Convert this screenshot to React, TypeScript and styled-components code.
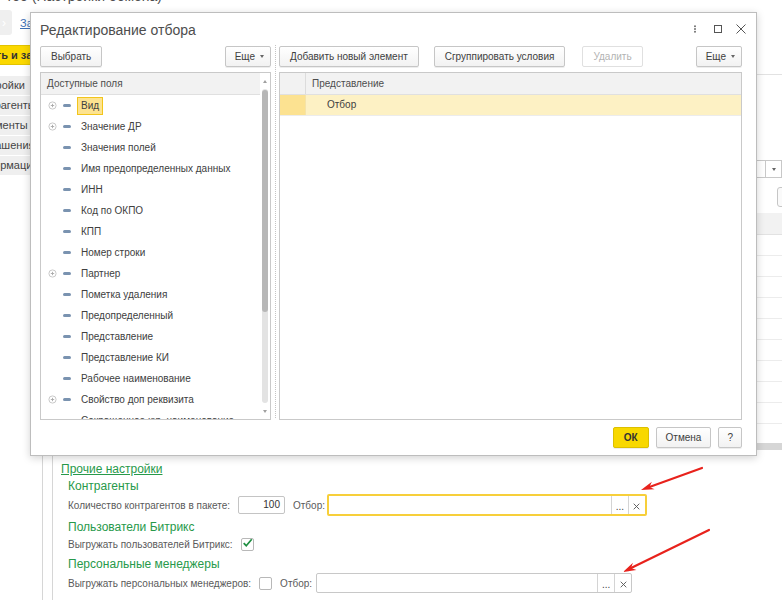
import React from "react";
import styled, { createGlobalStyle, css } from "styled-components";

const FONT = `"Liberation Sans", Arial, "DejaVu Sans", sans-serif`;

const GlobalStyle = createGlobalStyle`
  html, body { margin: 0; padding: 0; background: #ffffff; }
  * { box-sizing: border-box; }
`;

const Page = styled.div`
  position: relative;
  width: 782px;
  height: 607px;
  overflow: hidden;
  background: #fff;
  font-family: ${FONT};
  font-size: 10px;
  color: #404040;
`;

/* ---------- background form ---------- */
const FormTitle = styled.div`
  margin-top: -13px;
  height: 18px;
  padding-left: 6px;
  font-size: 14px;
  line-height: 18px;
  color: #4d4d4d;
  white-space: nowrap;
`;

const CommandRow = styled.div`
  display: flex;
  align-items: center;
  gap: 8px;
  height: 25px;
  margin-top: 5px;
  margin-left: -12px;
`;

const NavButton = styled.div`
  width: 24px;
  height: 25px;
  border-radius: 3px;
  background: #efefef;
  color: #fff;
  font-size: 12px;
  display: flex;
  align-items: center;
  justify-content: flex-end;
  padding-right: 6px;
`;

const FormLink = styled.span`
  font-size: 11px;
  color: #3d6fb6;
  text-decoration: underline;
  white-space: nowrap;
`;

const SaveRow = styled.div`
  display: flex;
  height: 20px;
  margin-top: 10px;
  margin-left: -54px;
`;

const SaveButton = styled.div`
  height: 20px;
  padding: 0 10px;
  background: #fbd800;
  border: 1px solid #e2c300;
  border-radius: 2px;
  font-weight: bold;
  font-size: 11px;
  line-height: 18px;
  color: #333;
  white-space: nowrap;
`;

const Workspace = styled.div`
  display: flex;
  align-items: stretch;
  margin-top: 9px;
  height: 526px;
`;

const TabList = styled.div`
  flex: none;
  width: 73px;
  margin-left: -35px;
  margin-top: 2px;
  align-self: flex-start;
  display: flex;
  flex-direction: column;
`;

const Tab = styled.div`
  height: 20px;
  padding-left: 6px;
  background: #efefef;
  border-bottom: 1px solid #ffffff;
  font-size: 11px;
  line-height: 19px;
  color: #444;
  white-space: nowrap;
  overflow: hidden;
`;

const Content = styled.div`
  flex: 1;
  min-width: 0;
  margin-left: 4px;
  border-left: 1px solid #d6d6d6;
  display: flex;
  flex-direction: column;
`;

const TopLine = styled.div`
  height: 1px;
  background: #e2e2e2;
  flex: none;
`;

const Inner = styled.div`
  flex: 1;
  margin-left: 9px;
  border-left: 1px solid #d6d6d6;
  padding-left: 8px;
  display: flex;
  flex-direction: column;
`;

const FilterRow = styled.div`
  display: flex;
  justify-content: flex-end;
  margin-top: 85px;
  height: 18px;
`;

const SelectBox = styled.div`
  width: 190px;
  height: 18px;
  border: 1px solid #c8c8c8;
  display: flex;
  justify-content: flex-end;
`;

const SelectDrop = styled.div`
  width: 16px;
  border-left: 1px solid #c8c8c8;
  display: flex;
  align-items: center;
  justify-content: center;
`;

const Caret = styled.span<{ $up?: boolean; $color?: string }>`
  display: inline-block;
  width: 0;
  height: 0;
  border-left: 2.5px solid transparent;
  border-right: 2.5px solid transparent;
  ${(p) =>
    p.$up
      ? css`border-bottom: 3px solid ${p.$color || "#a0a0a0"};`
      : css`border-top: 3px solid ${p.$color || "#666"};`}
`;

const BgButtonRow = styled.div`
  display: flex;
  justify-content: flex-end;
  margin-top: 9px;
  height: 20px;
`;

const BgButton = styled.div`
  width: 65px;
  height: 20px;
  margin-right: -60px;
  border: 1px solid #c6c6c6;
  border-radius: 3px;
  background: #fafafa;
`;

const BgTable = styled.div`
  margin-top: 6px;
  margin-left: 60px;
  margin-right: -40px;
  border-left: 1px solid #d0d0d0;
`;

const BgTableHead = styled.div`
  height: 22px;
  background: #f2f2f2;
  border-bottom: 1px solid #e2e2e2;
`;

const BgTableRow = styled.div`
  height: 21px;
  border-bottom: 1px solid #ececec;
`;

const BgTableFill = styled.div`
  height: 19px;
`;

const BgHScroll = styled.div`
  height: 7px;
  background: #d6d6d6;
`;

const Group = styled.div`
  margin-top: 12px;
  display: flex;
  flex-direction: column;
`;

const GREEN = "#27994a";

const GroupLink = styled.span`
  align-self: flex-start;
  font-size: 12px;
  line-height: 14px;
  color: ${GREEN};
  text-decoration: underline;
  white-space: nowrap;
`;

const GroupBody = styled.div`
  padding-left: 7px;
  display: flex;
  flex-direction: column;
`;

const SubTitle = styled.div<{ $gap: number }>`
  margin-top: ${(p) => p.$gap}px;
  font-size: 12px;
  line-height: 15px;
  color: ${GREEN};
  white-space: nowrap;
`;

const FieldRow = styled.div<{ $h: number; $gap: number }>`
  display: flex;
  align-items: center;
  height: ${(p) => p.$h}px;
  margin-top: ${(p) => p.$gap}px;
  white-space: nowrap;
`;

const Label = styled.span<{ $after?: number }>`
  color: #5a5a5a;
  margin-right: ${(p) => p.$after ?? 0}px;
  white-space: nowrap;
`;

const NumInput = styled.div`
  width: 47px;
  height: 18px;
  border: 1px solid #c4c4c4;
  border-radius: 2px;
  text-align: right;
  padding-right: 4px;
  line-height: 16px;
  color: #333;
  margin-right: 8px;
`;

const Field = styled.div<{ $focused?: boolean; $w: number }>`
  width: ${(p) => p.$w}px;
  display: flex;
  background: #fff;
  border-radius: 2px;
  ${(p) =>
    p.$focused
      ? css`
          height: 22px;
          border: 2px solid #f7cf3a;
        `
      : css`
          height: 20px;
          border: 1px solid #c8c8c8;
        `}
`;

const FieldText = styled.div`
  flex: 1;
`;

const FieldButton = styled.div`
  width: 17px;
  border-left: 1px solid #d4d4d4;
  display: flex;
  align-items: center;
  justify-content: center;
  color: #444;
  font-size: 10px;
  padding-top: 3px;
`;

const CheckBox = styled.div<{ $after: number }>`
  width: 13px;
  height: 13px;
  border: 1px solid #b8b8b8;
  border-radius: 2px;
  background: #fff;
  margin-right: ${(p) => p.$after}px;
  display: flex;
  align-items: center;
  justify-content: center;
  flex: none;
`;

/* ---------- dialog ---------- */
const Dialog = styled.div`
  position: absolute;
  left: 30px;
  top: 12px;
  width: 727px;
  height: 444px;
  background: #fff;
  border: 1px solid #bdbdbd;
  box-shadow: 0 2px 8px rgba(0, 0, 0, 0.18);
  display: flex;
  flex-direction: column;
  padding: 0 14px 7px 9px;
  z-index: 2;
`;

const TitleBar = styled.div`
  flex: none;
  height: 32px;
  display: flex;
  align-items: center;
`;

const DialogTitle = styled.div`
  flex: 1;
  font-size: 14px;
  color: #4d4d4d;
  padding-top: 1px;
`;

const WindowIcons = styled.div`
  display: flex;
  align-items: center;
  gap: 9px;
  margin-right: -6px;
`;

const IconBox = styled.span`
  width: 14px;
  height: 14px;
  display: flex;
`;

const Body = styled.div`
  flex: 1;
  min-height: 0;
  display: grid;
  grid-template-columns: 231px 8px 1fr;
  grid-template-rows: 22px 1fr;
  row-gap: 5px;
`;

const ToolbarLeft = styled.div`
  grid-column: 1;
  grid-row: 1;
  display: flex;
  align-items: center;
  justify-content: space-between;
`;

const ToolbarRight = styled.div`
  grid-column: 3;
  grid-row: 1;
  display: flex;
  align-items: center;
`;

const Splitter = styled.div`
  grid-column: 2;
  grid-row: 1 / 3;
  margin-left: 4px;
  margin-bottom: 2px;
  border-left: 1px dotted #c4c4c4;
`;

const Btn = styled.div<{ $primary?: boolean; $disabled?: boolean; $gapAfter?: number; $pad?: string }>`
  flex: none;
  height: 21px;
  padding: ${(p) => p.$pad || "0 10px"};
  margin-right: ${(p) => p.$gapAfter ?? 0}px;
  display: inline-flex;
  align-items: center;
  gap: 5px;
  font-size: 10px;
  color: #404040;
  white-space: nowrap;
  background: linear-gradient(#ffffff, #f2f2f2);
  border: 1px solid #c6c6c6;
  border-radius: 2px;
  box-shadow: 0 1px 0 rgba(0, 0, 0, 0.07);
  ${(p) =>
    p.$primary &&
    css`
      background: #f8d800;
      border-color: #dcc000;
      font-weight: bold;
      color: #333;
    `}
  ${(p) =>
    p.$disabled &&
    css`
      background: #ffffff;
      border-color: #e0e0e0;
      color: #b3b3b3;
      box-shadow: none;
    `}
`;

const Spacer = styled.div`
  flex: 1;
`;

const Panel = styled.div<{ $col: number }>`
  grid-column: ${(p) => p.$col};
  grid-row: 2;
  min-height: 0;
  border: 1px solid #c9c9c9;
  background: #fff;
  display: flex;
  overflow: hidden;
`;

const FieldsPane = styled.div`
  flex: 1;
  min-width: 0;
  display: flex;
  flex-direction: column;
`;

const PaneHeader = styled.div`
  flex: none;
  height: 22px;
  background: #f2f2f2;
  border-bottom: 1px solid #e0e0e0;
  padding-left: 6px;
  line-height: 21px;
  color: #4d4d4d;
`;

const TreeList = styled.div`
  flex: 1;
  overflow: hidden;
`;

const TreeRow = styled.div`
  height: 21px;
  display: flex;
  align-items: center;
  padding-left: 6px;
  white-space: nowrap;
`;

const Expander = styled.span`
  width: 10px;
  height: 10px;
  display: flex;
  align-items: center;
  justify-content: center;
  flex: none;
`;

const FieldDash = styled.span`
  width: 8px;
  height: 3px;
  margin-left: 6px;
  border-radius: 1.5px;
  background: #7a93b0;
  flex: none;
`;

const FieldName = styled.span<{ $selected?: boolean }>`
  margin-left: 6px;
  height: 18px;
  padding: 0 3px;
  line-height: 16px;
  border: 1px solid transparent;
  color: #404040;
  ${(p) =>
    p.$selected &&
    css`
      background: #fde390;
      border-color: #f2c51c;
    `}
`;

const ScrollBar = styled.div`
  flex: none;
  width: 10px;
  display: flex;
  flex-direction: column;
  align-items: center;
`;

const ScrollArrow = styled.div`
  flex: none;
  height: 16px;
  display: flex;
  align-items: center;
  justify-content: center;
`;

const ScrollTrack = styled.div`
  flex: 1;
  width: 6px;
  border-radius: 3px;
  background: #e3e3e3;
`;

const ScrollThumb = styled.div`
  margin-top: 1px;
  height: 222px;
  border-radius: 3px;
  background: #b7b7b7;
`;

const GridPane = styled.div`
  flex: 1;
  display: flex;
  flex-direction: column;
`;

const GridHeader = styled.div`
  height: 22px;
  display: flex;
  background: #f2f2f2;
  border-bottom: 1px solid #e0e0e0;
  flex: none;
`;

const GridRow = styled.div<{ $selected?: boolean }>`
  height: 21px;
  display: flex;
  border-bottom: 1px solid #ececec;
  flex: none;
  ${(p) => p.$selected && css`background: #fdf1c4;`}
`;

const MarkCell = styled.div<{ $selected?: boolean }>`
  width: 26px;
  flex: none;
  border-right: 1px solid #dcdcdc;
  ${(p) => p.$selected && css`background: #fce291; border-right-color: #f5e3a8;`}
`;

const GridCell = styled.div<{ $indent: number; $head?: boolean }>`
  flex: 1;
  padding-left: ${(p) => p.$indent}px;
  line-height: ${(p) => (p.$head ? 21 : 20)}px;
  color: ${(p) => (p.$head ? "#4d4d4d" : "#404040")};
`;

const Footer = styled.div`
  flex: none;
  margin-top: 7px;
  height: 21px;
  display: flex;
  justify-content: flex-end;
  gap: 7px;
`;

const Overlay = styled.svg`
  position: absolute;
  left: 0;
  top: 0;
  pointer-events: none;
  z-index: 3;
`;

/* ---------- data ---------- */
const fields: { name: string; expand?: boolean; selected?: boolean }[] = [
  { name: "Вид", expand: true, selected: true },
  { name: "Значение ДР", expand: true },
  { name: "Значения полей" },
  { name: "Имя предопределенных данных" },
  { name: "ИНН" },
  { name: "Код по ОКПО" },
  { name: "КПП" },
  { name: "Номер строки" },
  { name: "Партнер", expand: true },
  { name: "Пометка удаления" },
  { name: "Предопределенный" },
  { name: "Представление" },
  { name: "Представление КИ" },
  { name: "Рабочее наименование" },
  { name: "Свойство доп реквизита", expand: true },
  { name: "Сокращенное юр. наименование" },
];

const tabs = ["Настройки", "Контрагенты", "Документы", "Соглашения", "Информация"];

const PlusCircle = () => (
  <svg width="9" height="9" viewBox="0 0 9 9">
    <circle cx="4.5" cy="4.5" r="3.6" fill="none" stroke="#c2c2c2" strokeWidth="0.9" />
    <path d="M2.8 4.5h3.4M4.5 2.8v3.4" stroke="#a8a8a8" strokeWidth="0.9" />
  </svg>
);

const CrossIcon = ({ size = 7, color = "#555" }: { size?: number; color?: string }) => (
  <svg width={size} height={size} viewBox="0 0 10 10">
    <path d="M1 1L9 9M9 1L1 9" stroke={color} strokeWidth="1.3" />
  </svg>
);

const CheckMark = () => (
  <svg width="13" height="12" viewBox="0 0 13 12" style={{ marginTop: -2 }}>
    <path d="M2 6.2L5 9.2L11.5 1.5" fill="none" stroke="#1f8f42" strokeWidth="2" />
  </svg>
);

type Pt = [number, number];
const arrows: { from: Pt; to: Pt }[] = [
  { from: [702, 468], to: [641, 490] },
  { from: [709, 530], to: [623, 572] },
];

function arrowGeometry(from: Pt, to: Pt) {
  const dx = to[0] - from[0];
  const dy = to[1] - from[1];
  const l = Math.hypot(dx, dy);
  const ux = dx / l;
  const uy = dy / l;
  const len = 13;
  const half = 4;
  const bx = to[0] - ux * len;
  const by = to[1] - uy * len;
  const nx = -uy * half;
  const ny = ux * half;
  const nbx = to[0] - ux * (len - 4);
  const nby = to[1] - uy * (len - 4);
  return {
    end: [nbx, nby] as Pt,
    points: `${to[0]},${to[1]} ${bx + nx},${by + ny} ${nbx},${nby} ${bx - nx},${by - ny}`,
  };
}

export default function App() {
  return (
    <>
      <GlobalStyle />
      <Page>
        <FormTitle>тоо (Настройки обмена)</FormTitle>
        <CommandRow>
          <NavButton>›</NavButton>
          <FormLink>Загрузить настройки</FormLink>
        </CommandRow>
        <SaveRow>
          <SaveButton>Записать и закрыть</SaveButton>
        </SaveRow>
        <Workspace>
          <TabList>
            {tabs.map((t) => (
              <Tab key={t}>{t}</Tab>
            ))}
          </TabList>
          <Content>
            <TopLine />
            <Inner>
              <FilterRow>
                <SelectBox>
                  <SelectDrop>
                    <Caret />
                  </SelectDrop>
                </SelectBox>
              </FilterRow>
              <BgButtonRow>
                <BgButton />
              </BgButtonRow>
              <BgTable>
                <BgTableHead />
                {Array.from({ length: 9 }).map((_, i) => (
                  <BgTableRow key={i} />
                ))}
                <BgTableFill />
                <BgHScroll />
              </BgTable>
              <Group>
                <GroupLink>Прочие настройки</GroupLink>
                <GroupBody>
                  <SubTitle $gap={3}>Контрагенты</SubTitle>
                  <FieldRow $h={22} $gap={0}>
                    <Label $after={8}>Количество контрагентов в пакете:</Label>
                    <NumInput>100</NumInput>
                    <Label $after={2}>Отбор:</Label>
                    <Field $focused $w={320}>
                      <FieldText />
                      <FieldButton>...</FieldButton>
                      <FieldButton>
                        <CrossIcon />
                      </FieldButton>
                    </Field>
                  </FieldRow>
                  <SubTitle $gap={4}>Пользователи Битрикс</SubTitle>
                  <FieldRow $h={16} $gap={1}>
                    <Label $after={8}>Выгружать пользователей Битрикс:</Label>
                    <CheckBox $after={0}>
                      <CheckMark />
                    </CheckBox>
                  </FieldRow>
                  <SubTitle $gap={5}>Персональные менеджеры</SubTitle>
                  <FieldRow $h={20} $gap={1}>
                    <Label $after={8}>Выгружать персональных менеджеров:</Label>
                    <CheckBox $after={8} />
                    <Label $after={4}>Отбор:</Label>
                    <Field $w={316}>
                      <FieldText />
                      <FieldButton>...</FieldButton>
                      <FieldButton>
                        <CrossIcon />
                      </FieldButton>
                    </Field>
                  </FieldRow>
                </GroupBody>
              </Group>
            </Inner>
          </Content>
        </Workspace>

        <Dialog>
          <TitleBar>
            <DialogTitle>Редактирование отбора</DialogTitle>
            <WindowIcons>
              <IconBox>
                <svg width="14" height="14" viewBox="0 0 14 14">
                  <circle cx="7" cy="4.3" r="0.95" fill="#666" />
                  <circle cx="7" cy="7" r="0.95" fill="#666" />
                  <circle cx="7" cy="9.7" r="0.95" fill="#666" />
                </svg>
              </IconBox>
              <IconBox>
                <svg width="14" height="14" viewBox="0 0 14 14">
                  <rect x="3.5" y="3.5" width="7" height="7" fill="none" stroke="#555" strokeWidth="1" />
                </svg>
              </IconBox>
              <IconBox>
                <svg width="14" height="14" viewBox="0 0 14 14">
                  <path d="M2.5 2.5L11.5 11.5M11.5 2.5L2.5 11.5" stroke="#555" strokeWidth="1" />
                </svg>
              </IconBox>
            </WindowIcons>
          </TitleBar>

          <Body>
            <ToolbarLeft>
              <Btn>Выбрать</Btn>
              <Btn $pad="0 6px 0 9px">
                Еще <Caret />
              </Btn>
            </ToolbarLeft>
            <Splitter />
            <ToolbarRight>
              <Btn $gapAfter={15}>Добавить новый элемент</Btn>
              <Btn $gapAfter={17}>Сгруппировать условия</Btn>
              <Btn $disabled>Удалить</Btn>
              <Spacer />
              <Btn $pad="0 6px 0 9px">
                Еще <Caret />
              </Btn>
            </ToolbarRight>

            <Panel $col={1}>
              <FieldsPane>
                <PaneHeader>Доступные поля</PaneHeader>
                <TreeList>
                  {fields.map((f) => (
                    <TreeRow key={f.name}>
                      <Expander>{f.expand && <PlusCircle />}</Expander>
                      <FieldDash />
                      <FieldName $selected={f.selected}>{f.name}</FieldName>
                    </TreeRow>
                  ))}
                </TreeList>
              </FieldsPane>
              <ScrollBar>
                <ScrollArrow>
                  <Caret $up />
                </ScrollArrow>
                <ScrollTrack>
                  <ScrollThumb />
                </ScrollTrack>
                <ScrollArrow>
                  <Caret $color="#a0a0a0" />
                </ScrollArrow>
              </ScrollBar>
            </Panel>

            <Panel $col={3}>
              <GridPane>
                <GridHeader>
                  <MarkCell />
                  <GridCell $indent={6} $head>
                    Представление
                  </GridCell>
                </GridHeader>
                <GridRow $selected>
                  <MarkCell $selected />
                  <GridCell $indent={21}>Отбор</GridCell>
                </GridRow>
              </GridPane>
            </Panel>
          </Body>

          <Footer>
            <Btn $primary $pad="0 10px">ОК</Btn>
            <Btn $pad="0 9px">Отмена</Btn>
            <Btn $pad="0 8px">?</Btn>
          </Footer>
        </Dialog>

        <Overlay width="782" height="607" viewBox="0 0 782 607">
          {arrows.map((a, i) => {
            const g = arrowGeometry(a.from, a.to);
            return (
              <g key={i}>
                <line
                  x1={a.from[0]}
                  y1={a.from[1]}
                  x2={g.end[0]}
                  y2={g.end[1]}
                  stroke="#e8221c"
                  strokeWidth="2.2"
                  strokeLinecap="round"
                />
                <polygon points={g.points} fill="#e8221c" />
              </g>
            );
          })}
        </Overlay>
      </Page>
    </>
  );
}
